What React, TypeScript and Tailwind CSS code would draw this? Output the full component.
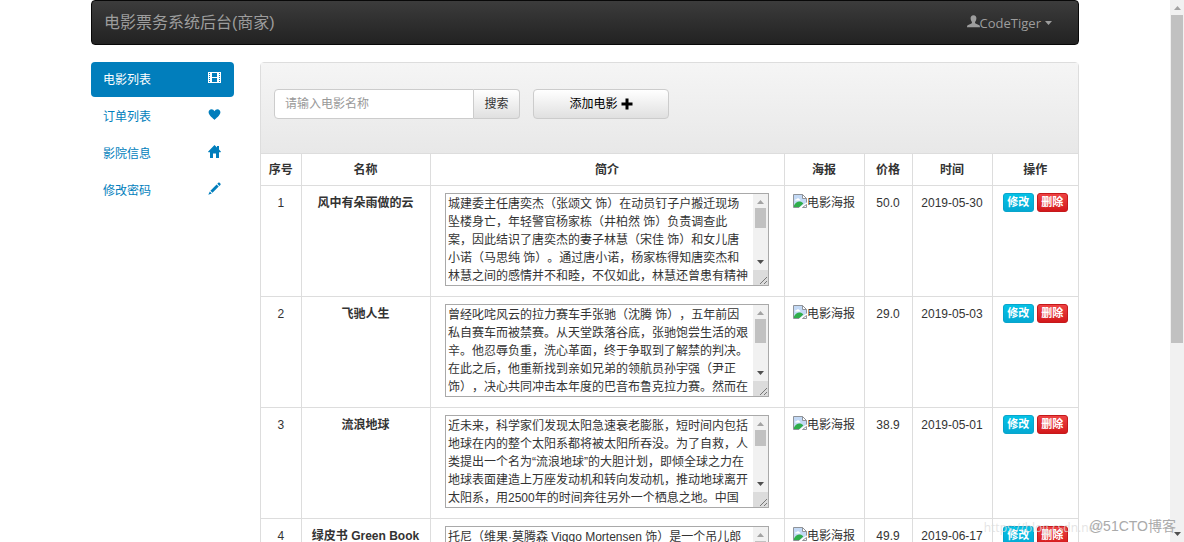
import type { ReactNode } from 'react';

interface Movie {
  id: number;
  name: string;
  intro: string;
  price: string;
  date: string;
  thumb: string;
}

const MOVIES: Movie[] = [
  {
    id: 1,
    name: '风中有朵雨做的云',
    intro:
      '城建委主任唐奕杰（张颂文 饰）在动员钉子户搬迁现场坠楼身亡，年轻警官杨家栋（井柏然 饰）负责调查此案，因此结识了唐奕杰的妻子林慧（宋佳 饰）和女儿唐小诺（马思纯 饰）。通过唐小诺，杨家栋得知唐奕杰和林慧之间的感情并不和睦，不仅如此，林慧还曾患有精神',
    price: '50.0',
    date: '2019-05-30',
    thumb: 'h-5',
  },
  {
    id: 2,
    name: '飞驰人生',
    intro:
      '曾经叱咤风云的拉力赛车手张驰（沈腾 饰），五年前因私自赛车而被禁赛。从天堂跌落谷底，张驰饱尝生活的艰辛。他忍辱负重，洗心革面，终于争取到了解禁的判决。在此之后，他重新找到亲如兄弟的领航员孙宇强（尹正 饰），决心共同冲击本年度的巴音布鲁克拉力赛。然而在',
    price: '29.0',
    date: '2019-05-03',
    thumb: 'h-6',
  },
  {
    id: 3,
    name: '流浪地球',
    intro:
      '近未来，科学家们发现太阳急速衰老膨胀，短时间内包括地球在内的整个太阳系都将被太阳所吞没。为了自救，人类提出一个名为“流浪地球”的大胆计划，即倾全球之力在地球表面建造上万座发动机和转向发动机，推动地球离开太阳系，用2500年的时间奔往另外一个栖息之地。中国',
    price: '38.9',
    date: '2019-05-01',
    thumb: 'h-4',
  },
  {
    id: 4,
    name: '绿皮书 Green Book',
    intro: '托尼（维果·莫腾森 Viggo Mortensen 饰）是一个吊儿郎',
    price: '49.9',
    date: '2019-06-17',
    thumb: 'h-5',
  },
];

const HEADERS = ['序号', '名称', '简介', '海报', '价格', '时间', '操作'];

function FilmIcon() {
  return (
    <svg className="size-[13px]" viewBox="0 0 13 13" fill="currentColor" fillRule="evenodd">
      <path d="M0 1h13v11H0zM1 2v1h1V2zM1 4v1h1V4zM1 6v1h1V6zM1 8v1h1V8zM1 10v1h1v-1zM11 2v1h1V2zM11 4v1h1V4zM11 6v1h1V6zM11 8v1h1V8zM11 10v1h1v-1zM4 2v4h5V2zM4 7v4h5V7z" />
    </svg>
  );
}

function HeartIcon() {
  return (
    <svg className="size-[13px]" viewBox="0 0 13 13" fill="currentColor">
      <path d="M6.500 12C5.500 10.800 1 7.800.6 4.600.4 2.500 1.900 1.200 3.500 1.200c1.300 0 2.400.8 3 2 .6-1.200 1.700-2 3-2 1.600 0 3.100 1.300 2.900 3.400C12 7.800 7.500 10.800 6.500 12z" />
    </svg>
  );
}

function HomeIcon() {
  return (
    <svg className="size-[13px]" viewBox="0 0 13 13" fill="currentColor">
      <path d="M6.500 0L9 2.500V1h2v3.500l2 2.200-.5.500H11V13H8V8.500H5V13H2V7.200H.5L0 6.700z" />
    </svg>
  );
}

function PencilIcon() {
  return (
    <svg className="size-[13px]" viewBox="0 0 13 13" fill="currentColor">
      <path d="M10.300.8c.4-.4.900-.4 1.300 0l.8.8c.4.4.4.900 0 1.300l-1 1-2.100-2.100zM8.600 2.500l2.100 2.100-6.200 6.200-2.100-2.100zM1.800 9.400l2 2L.3 12.800z" />
    </svg>
  );
}

const NAV: { label: string; icon: ReactNode; active?: boolean }[] = [
  { label: '电影列表', icon: <FilmIcon />, active: true },
  { label: '订单列表', icon: <HeartIcon /> },
  { label: '影院信息', icon: <HomeIcon /> },
  { label: '修改密码', icon: <PencilIcon /> },
];

function BrokenImage() {
  return (
    <svg className="size-[14px] shrink-0" viewBox="0 0 14 14">
      <path d="M.5.500h9l4 4v4L6 13.500H.5z" fill="#c3d9f5" />
      <path d="M2 6.500c0-1 .8-1.500 1.500-1.300C4 4 6 4 6.300 5.300c.8 0 1.200.6 1.200 1.200z" fill="#fff" />
      <path d="M1 13V11.500c1.500-3 4-4.500 6-4 1.500.3 2.500 1 3.300 2L6.500 13z" fill="#2fae4b" />
      <path d="M13.500 8.500v-4l-4-4H.5v13h5.700" fill="none" stroke="#8f9399" />
      <path d="M9.500.5v4h4z" fill="#fff" stroke="#8f9399" />
      <path d="M13.500 10.500v3h-4z" fill="#fff" stroke="#8f9399" />
    </svg>
  );
}

function Arrow({ down = false, className }: { down?: boolean; className: string }) {
  return (
    <svg className={`h-1 w-[7px] shrink-0 ${className}`} viewBox="0 0 7 4" fill="currentColor">
      <path d={down ? 'M0 0h7L3.500 4z' : 'M0 4h7L3.500 0z'} />
    </svg>
  );
}

function IntroBox({ movie }: { movie: Movie }) {
  return (
    <div className="mx-auto flex h-[93px] max-w-[324px] border border-[#a9a9a9] bg-white">
      <textarea
        aria-label={`${movie.name} 简介`}
        defaultValue={movie.intro}
        className="min-w-0 flex-1 resize-none overflow-hidden pt-px pr-1 pl-0.5 text-left text-xs leading-[18px] text-[#333] outline-none"
      />
      <div className="flex w-[15px] shrink-0 flex-col items-center bg-[#f1f1f1]">
        <Arrow className="mt-1.5 text-[#a3a3a3]" />
        <div className={`mt-1 w-[11px] bg-[#c1c1c1] ${movie.thumb}`} />
        <Arrow down className="mt-auto mb-1.5 text-[#505050]" />
        <svg className="size-[15px] shrink-0 bg-[#dcdcdc]" viewBox="0 0 15 15" stroke="#777" fill="none">
          <path d="M7 14l7-7M11 14l3-3" />
        </svg>
      </div>
    </div>
  );
}

function MovieRow({ movie }: { movie: Movie }) {
  return (
    <tr className="h-[111px] border-t border-[#ddd] align-top">
      <td className="pt-2">{movie.id}</td>
      <td className="pt-2 font-bold">{movie.name}</td>
      <td className="px-[14px] pt-[7px]">
        <IntroBox movie={movie} />
      </td>
      <td className="pt-2">
        <span className="flex justify-center">
          <BrokenImage />
          电影海报
        </span>
      </td>
      <td className="pt-2">{movie.price}</td>
      <td className="pt-2">{movie.date}</td>
      <td className="pt-[7px]">
        <div className="flex justify-center gap-[3px]">
          <button className="h-[19px] w-[31px] rounded-[3px] border border-[#0aa5cb] bg-linear-to-b from-[#04c2e6] to-[#04a9d3] text-[11px] leading-[17px] font-bold text-white">
            修改
          </button>
          <button className="h-[19px] w-[31px] rounded-[3px] border border-[#c5191b] bg-linear-to-b from-[#ee4243] to-[#d3171a] text-[11px] leading-[17px] font-bold text-white">
            删除
          </button>
        </div>
      </td>
    </tr>
  );
}

export default function App() {
  return (
    <div className="relative flex h-screen overflow-hidden bg-white font-['Liberation_Sans','Noto_Sans_CJK_SC',sans-serif] text-xs leading-[18px] text-[#333] [text-spacing-trim:space-all]">
      <div className="min-w-0 flex-1 overflow-hidden">
        <div className="mx-auto max-w-[988px]">
          <header className="flex h-[45px] items-center justify-between rounded border border-[#080808] bg-linear-to-b from-[#3c3c3c] to-[#222] pr-[26px] pl-3 text-[#9d9d9d]">
            <a href="#" className="text-base">
              电影票务系统后台(商家)
            </a>
            <button className="flex items-center font-['Open_Sans',sans-serif] text-[13px]">
              <svg className="mb-0.5 size-[13px]" viewBox="0 0 13 13" fill="currentColor">
                <path d="M6.500.3c2 0 3 1.400 2.900 3.300-.1 1.500-.7 2.600-1.300 3.300-.3.900.1 1.400 1 1.800l2.700 1.200c.9.400 1.200 1 1.200 2.300H0c0-1.300.3-1.900 1.200-2.300l2.700-1.200c.9-.4 1.300-.9 1-1.800-.6-.7-1.200-1.800-1.300-3.300C3.500 1.700 4.500.3 6.500.3z" />
              </svg>
              CodeTiger
              <Arrow down className="ml-1" />
            </button>
          </header>

          <div className="mt-[17px] flex gap-[26px]">
            <nav className="flex w-[143px] shrink-0 flex-col gap-0.5">
              {NAV.map((item) => (
                <a
                  key={item.label}
                  href="#"
                  className={`flex h-[35px] items-center justify-between rounded pr-[13px] pl-3 ${
                    item.active ? 'bg-[#017ebc] text-white' : 'text-[#017ebc]'
                  }`}
                >
                  {item.label}
                  <span className="mb-1">{item.icon}</span>
                </a>
              ))}
            </nav>

            <main className="min-w-0 flex-1 rounded-t border border-[#ddd]">
              <div className="flex h-[90px] items-start gap-[13px] bg-linear-to-b from-[#f5f5f5] to-[#e8e8e8] px-[13px] pt-[26px]">
                <form className="flex" onSubmit={(e) => e.preventDefault()}>
                  <input
                    type="text"
                    aria-label="电影名称"
                    placeholder="请输入电影名称"
                    className="h-[30px] w-[200px] rounded-l border border-[#ccc] bg-white px-2.5 placeholder-[#999] outline-none"
                  />
                  <button className="h-[30px] w-[46px] rounded-r border border-l-0 border-[#ccc] bg-linear-to-b from-white to-[#e0e0e0]">
                    搜索
                  </button>
                </form>
                <button className="flex h-[30px] w-[136px] items-center justify-center gap-[3px] rounded border border-[#ccc] bg-linear-to-b from-white to-[#e0e0e0] text-black">
                  添加电影
                  <svg className="size-[12px]" viewBox="0 0 12 12" fill="currentColor">
                    <path d="M4.500.5h3v4h4v3h-4v4h-3v-4h-4v-3h4z" />
                  </svg>
                </button>
              </div>

              <table className="w-full table-fixed border-collapse text-center [&_td+td]:border-l [&_td+td]:border-[#ddd] [&_th+th]:border-l [&_th+th]:border-[#ddd]">
                <colgroup>
                  <col className="w-10" />
                  <col className="w-[129px]" />
                  <col />
                  <col className="w-20" />
                  <col className="w-12" />
                  <col className="w-20" />
                  <col className="w-[86px]" />
                </colgroup>
                <thead>
                  <tr className="h-8 border-t border-[#ddd]">
                    {HEADERS.map((h) => (
                      <th key={h} className="font-bold">
                        {h}
                      </th>
                    ))}
                  </tr>
                </thead>
                <tbody>
                  {MOVIES.map((movie) => (
                    <MovieRow key={movie.id} movie={movie} />
                  ))}
                </tbody>
              </table>
            </main>
          </div>
        </div>
      </div>

      <div className="flex w-[14px] shrink-0 flex-col items-center bg-[#f1f1f1]">
        <Arrow className="mt-1.5 text-[#a3a3a3]" />
        <div className="mt-[5px] h-[60.5%] w-3 bg-[#c1c1c1]" />
        <Arrow down className="mt-auto mb-1.5 text-[#505050]" />
      </div>

      <div className="pointer-events-none absolute right-20 bottom-1.5 font-['Open_Sans',sans-serif] text-xs text-[#ddd]/80">
        https://blog.csdn.net/
      </div>
      <div className="pointer-events-none absolute right-2 bottom-1.5 text-sm text-[#aaa]">@51CTO博客</div>
    </div>
  );
}
